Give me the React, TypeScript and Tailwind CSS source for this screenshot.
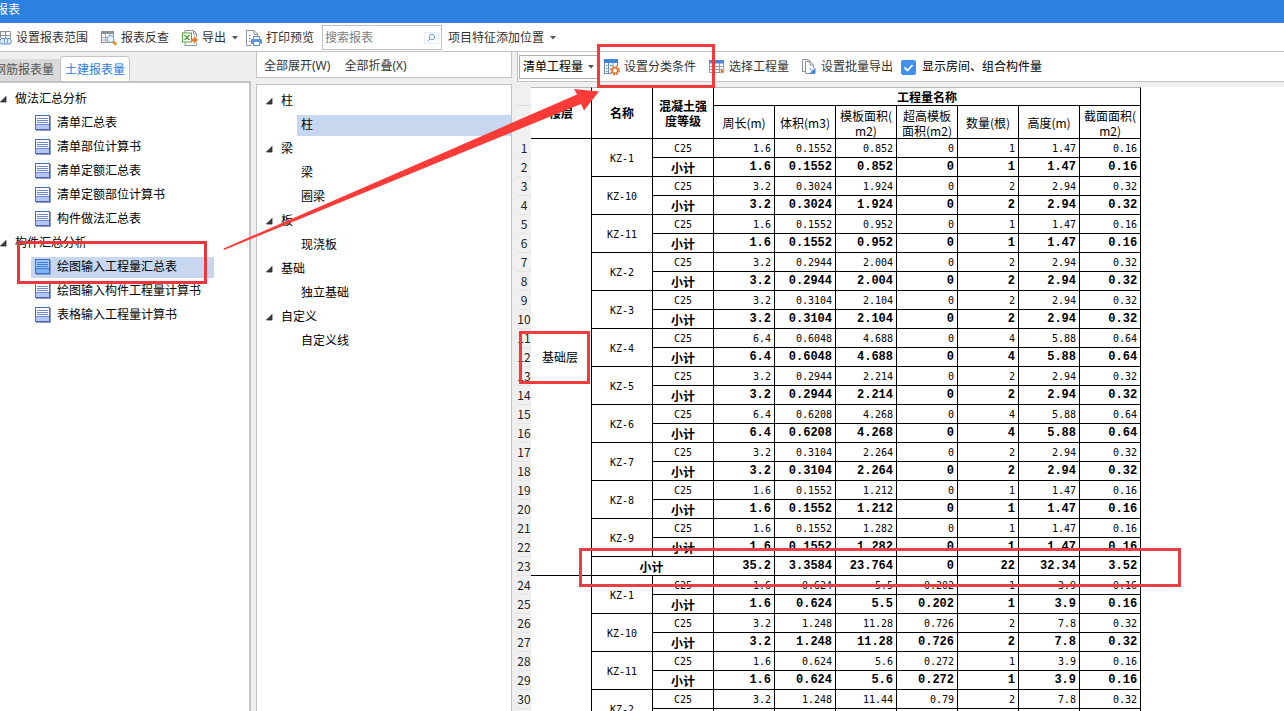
import type { ReactNode } from "react";

const ui = "font-['Noto_Sans','Noto_Sans_CJK_SC',sans-serif]";

type Member = { name: string; values: string[] };

const foundation: Member[] = [
  { name: "KZ-1", values: ["1.6", "0.1552", "0.852", "0", "1", "1.47", "0.16"] },
  { name: "KZ-10", values: ["3.2", "0.3024", "1.924", "0", "2", "2.94", "0.32"] },
  { name: "KZ-11", values: ["1.6", "0.1552", "0.952", "0", "1", "1.47", "0.16"] },
  { name: "KZ-2", values: ["3.2", "0.2944", "2.004", "0", "2", "2.94", "0.32"] },
  { name: "KZ-3", values: ["3.2", "0.3104", "2.104", "0", "2", "2.94", "0.32"] },
  { name: "KZ-4", values: ["6.4", "0.6048", "4.688", "0", "4", "5.88", "0.64"] },
  { name: "KZ-5", values: ["3.2", "0.2944", "2.214", "0", "2", "2.94", "0.32"] },
  { name: "KZ-6", values: ["6.4", "0.6208", "4.268", "0", "4", "5.88", "0.64"] },
  { name: "KZ-7", values: ["3.2", "0.3104", "2.264", "0", "2", "2.94", "0.32"] },
  { name: "KZ-8", values: ["1.6", "0.1552", "1.212", "0", "1", "1.47", "0.16"] },
  { name: "KZ-9", values: ["1.6", "0.1552", "1.282", "0", "1", "1.47", "0.16"] },
];
const foundationTotal = ["35.2", "3.3584", "23.764", "0", "22", "32.34", "3.52"];
const nextFloor: Member[] = [
  { name: "KZ-1", values: ["1.6", "0.624", "5.5", "0.202", "1", "3.9", "0.16"] },
  { name: "KZ-10", values: ["3.2", "1.248", "11.28", "0.726", "2", "7.8", "0.32"] },
  { name: "KZ-11", values: ["1.6", "0.624", "5.6", "0.272", "1", "3.9", "0.16"] },
  { name: "KZ-2", values: ["3.2", "1.248", "11.44", "0.79", "2", "7.8", "0.32"] },
];

const cell = "border-r border-b border-black p-0";

function RowNo({ n }: { n: number }) {
  return (
    <th scope="row" className="border-b border-[#e4e4e4] bg-[#f0f0f0] p-0 text-center text-xs leading-[18px] font-normal text-[#222]">
      {n}
    </th>
  );
}

function Values({ values, bold }: { values: string[]; bold?: boolean }) {
  return (
    <>
      {values.map((v, i) => (
        <td
          key={i}
          className={
            bold
              ? "border-r border-b border-black p-0 pt-px pr-[3px] text-right font-['Liberation_Mono',monospace] text-xs leading-[17px] font-bold"
              : "border-r border-b border-black p-0 pt-px pr-[3px] text-right font-['DejaVu_Sans_Mono',monospace] text-[10px] leading-[17px]"
          }
        >
          {v}
        </td>
      ))}
    </>
  );
}

function MemberRows({ member, start, floor }: { member: Member; start: number; floor?: ReactNode }) {
  return (
    <>
      <tr className="h-[19px]">
        <RowNo n={start} />
        {floor}
        <td rowSpan={2} className="border-r border-b border-black p-0 pt-0.5 text-center font-['DejaVu_Sans_Mono',monospace] text-[10px]">
          {member.name}
        </td>
        <td className="border-r border-b border-black p-0 pt-px text-center font-['DejaVu_Sans_Mono',monospace] text-[10px] leading-[17px]">
          C25
        </td>
        <Values values={member.values} />
      </tr>
      <tr className="h-[19px]">
        <RowNo n={start + 1} />
        <td className="border-r border-b border-black p-0 pt-px text-center text-xs leading-[17px] font-bold">小计</td>
        <Values values={member.values} bold />
      </tr>
    </>
  );
}

function ReportTable() {
  const heads: ReactNode[] = [
    "周长(m)",
    "体积(m3)",
    <>模板面积(<br />m2)</>,
    <>超高模板<br />面积(m2)</>,
    "数量(根)",
    "高度(m)",
    <>截面面积(<br />m2)</>,
  ];
  return (
    <table className="w-[624px] table-fixed border-separate border-spacing-0 font-['Noto_Sans_CJK_SC',sans-serif] text-xs text-black">
      <colgroup>
        <col className="w-[14px]" />
        {Array.from({ length: 10 }, (_, i) => <col key={i} className="w-[61px]" />)}
      </colgroup>
      <thead>
        <tr className="h-[19px]">
          <td className="border-b border-[#dcdcdc] bg-[#f0f0f0] p-0" />
          <th rowSpan={2} className={`${cell} border-t border-t-[#b8b8b8]`}>楼层</th>
          <th rowSpan={2} className={`${cell} border-t border-t-[#b8b8b8]`}>名称</th>
          <th rowSpan={2} className={`${cell} border-t border-t-[#b8b8b8] leading-[15px]`}>混凝土强<br />度等级</th>
          <th colSpan={7} className={`${cell} border-t border-t-[#b8b8b8] leading-[17px]`}>工程量名称</th>
        </tr>
        <tr className="h-[33px]">
          <td className="bg-[#f0f0f0] p-0" />
          {heads.map((h, i) => (
            <th key={i} className={`${cell} pt-px leading-[15px] font-normal`}>{h}</th>
          ))}
        </tr>
      </thead>
      <tbody>
        {foundation.map((m, i) => (
          <MemberRows
            key={m.name}
            member={m}
            start={i * 2 + 1}
            floor={i === 0 ? <td rowSpan={23} className={`${cell} pr-0.5 text-center`}>基础层</td> : undefined}
          />
        ))}
        <tr className="h-[19px]">
          <RowNo n={23} />
          <td colSpan={2} className={`${cell} pt-px pr-0.5 text-center leading-[17px] font-bold`}>小计</td>
          <Values values={foundationTotal} bold />
        </tr>
        {nextFloor.map((m, i) => (
          <MemberRows
            key={m.name}
            member={m}
            start={24 + i * 2}
            floor={i === 0 ? <td rowSpan={8} className={cell} /> : undefined}
          />
        ))}
      </tbody>
    </table>
  );
}

function Caret() {
  return (
    <svg width="6" height="4" viewBox="0 0 6 4" aria-hidden="true">
      <path d="M0 0h6L3 3.5z" fill="#555" />
    </svg>
  );
}

function Expander() {
  return (
    <svg width="7" height="7" viewBox="0 0 7 7" aria-hidden="true" className="shrink-0">
      <path d="M6 0.5V6H0.5z" fill="#404040" stroke="#222" strokeWidth="0.8" />
    </svg>
  );
}

function SheetIcon({ active }: { active?: boolean }) {
  return (
    <svg width="16" height="16" viewBox="0 0 16 16" aria-hidden="true" className="shrink-0">
      <rect x="0.5" y="0.5" width="14" height="14" fill={active ? "#9cc6f8" : "#fff"} stroke={active ? "#3d6fc0" : "#4d68b0"} />
      <path d="M15.5 1v14.5H1" fill="none" stroke="#8b9cc8" />
      <rect x="1" y="10" width="13" height="4" fill={active ? "#7fb2f3" : "#b4c7fa"} />
      <path d="M2 3.5h11M2 5.5h11M2 7.5h11M1 9.5h13" stroke={active ? "#3d7fd8" : "#6f8ac8"} />
    </svg>
  );
}

function RangeIcon() {
  return (
    <svg width="12" height="16" viewBox="4 0 12 16" aria-hidden="true">
      <path d="M0 1.5h14.5V8M0 5.5h14.5M4.5 1v7M9.5 1v7" fill="none" stroke="#8a929c" />
      <path d="M5 8.5h9l1.5 3-1.5 2.5H5l-1.5-2.5z" fill="#dceafa" stroke="#5a8fd0" />
      <path d="M8.5 8.5v5.5M11.5 8.5v5.5" stroke="#7fa8dc" />
    </svg>
  );
}

function LookupIcon() {
  return (
    <svg width="16" height="16" viewBox="0 0 16 16" aria-hidden="true">
      <rect x="0.5" y="1.5" width="12" height="11" fill="#fff" stroke="#8a929c" />
      <rect x="0" y="1" width="13" height="3" fill="#8a929c" />
      <path d="M1 7.5h12M1 10h12M4.5 4v9M8.5 4v9" stroke="#a5abb3" />
      <circle cx="9.5" cy="9" r="3.5" fill="#e6f1fd" stroke="#6fa3e0" />
      <path d="M12.2 11.7l3 3" stroke="#e09a2c" strokeWidth="2.8" />
    </svg>
  );
}

function ExportIcon() {
  return (
    <svg width="16" height="16" viewBox="0 0 16 16" aria-hidden="true">
      <path d="M3 3V.5h8.500L14.500 3.500V7M14.500 13v2.500H3V12" fill="none" stroke="#8a929c" />
      <path d="M11.500 1v3h3" fill="none" stroke="#8a929c" />
      <rect x="0.500" y="3" width="9" height="9" fill="#fff" stroke="#55a046" />
      <path d="M2.500 5l5 5M7.500 5l-5 5" stroke="#55a046" strokeWidth="1.500" />
      <path d="M9.500 8.500h2.500V6l4 4-4 4v-2.500H9.500z" fill="#dd7f33" />
    </svg>
  );
}

function PrintIcon() {
  return (
    <svg width="16" height="16" viewBox="0 0 16 16" aria-hidden="true">
      <path d="M5 15.500H.5V.5h7.500l3.500 3.500V6M8 1v3.500h3.500" fill="none" stroke="#8a929c" />
      <path d="M3 5.500h1.500M3 8.500h1.500M3 11.500h1.500" stroke="#7b838d" />
      <rect x="5" y="9" width="11" height="5" rx="1" fill="#5d97dc" />
      <rect x="7.500" y="6.500" width="6" height="3" fill="#fff" stroke="#5d97dc" />
      <rect x="7.500" y="11.500" width="6" height="4" fill="#fff" stroke="#5d97dc" />
    </svg>
  );
}

function ClassifyIcon() {
  return (
    <svg width="16" height="17" viewBox="0 0 16 17" aria-hidden="true">
      <rect x="0.500" y="1.500" width="13" height="13" fill="#fff" stroke="#5b8cc8" />
      <rect x="0" y="0" width="14" height="4" fill="#3f86d8" />
      <path d="M4.500 4v11M9 4v3M2 6.500h1.500M2 9.500h1.500M2 12.500h1.500M6 6.500h2M6 9.500h1" stroke="#5b8cc8" />
      <circle cx="11" cy="11.500" r="5" fill="#fff" />
      <circle cx="11" cy="11.500" r="4" fill="none" stroke="#e8762d" strokeWidth="2" strokeDasharray="1.800 1.340" />
      <circle cx="11" cy="11.500" r="2.700" fill="#fff" stroke="#e8762d" strokeWidth="1.600" />
    </svg>
  );
}

function PickIcon() {
  return (
    <svg width="16" height="16" viewBox="0 0 16 16" aria-hidden="true">
      <rect x="0.500" y="1.500" width="14" height="12" fill="#fff" stroke="#8a9bb0" />
      <rect x="0" y="1" width="15" height="3.500" fill="#4a88d4" />
      <path d="M1 7.500h14M1 10.500h14M5.500 4v10M10.500 4v10" stroke="#8a9bb0" />
      <path d="M11.500 8.500l4 3.500-4 3.500z" fill="#d27a35" stroke="#fff" strokeWidth="0.500" />
    </svg>
  );
}

function BatchIcon() {
  return (
    <svg width="15" height="16" viewBox="0 0 15 16" aria-hidden="true">
      <path d="M3 12.500H.5V.5h6L9 3" fill="none" stroke="#8a929c" />
      <path d="M8 14.500H3.500V2.500H8l3.500 3.500v3M8 3v3h3" fill="none" stroke="#8a929c" />
      <path d="M7.500 9l4 4M13 9.500v5H8z" fill="#4a88d4" stroke="#4a88d4" />
    </svg>
  );
}

function ToolButton({ icon, label, caret, className = "" }: { icon?: ReactNode; label: string; caret?: boolean; className?: string }) {
  return (
    <button type="button" className={`flex shrink-0 items-center gap-1 text-xs leading-4 whitespace-nowrap text-[#333] ${className}`}>
      {icon}
      <span>{label}</span>
      {caret && <span className="pl-0.5"><Caret /></span>}
    </button>
  );
}

function Toolbar() {
  return (
    <div className="flex h-[29px] shrink-0 items-center border-b border-[#c4c4c4] bg-white pt-px">
      <ToolButton icon={<RangeIcon />} label="设置报表范围" />
      <ToolButton icon={<LookupIcon />} label="报表反查" className="ml-[13px]" />
      <ToolButton icon={<ExportIcon />} label="导出" caret className="ml-[13px]" />
      <ToolButton icon={<PrintIcon />} label="打印预览" className="ml-2" />
      <label className="ml-2 flex h-[25px] w-[120px] items-center border border-[#c0c0c0] px-0.5">
        <input
          type="text"
          aria-label="搜索报表"
          placeholder="搜索报表"
          className="min-w-0 flex-1 text-xs outline-none placeholder:text-[#808080]"
        />
        <svg width="15" height="12" viewBox="0 0 15 12" aria-hidden="true">
          <rect x="0.500" y="0.500" width="14" height="11" fill="none" stroke="#e3eefb" />
          <circle cx="8" cy="5" r="2.700" fill="none" stroke="#6aa5e8" />
          <path d="M6 7L3.500 9.500" stroke="#6aa5e8" />
        </svg>
      </label>
      <ToolButton label="项目特征添加位置" caret className="ml-1.5" />
    </div>
  );
}

function ReportGroup({ title, items, selected }: { title: string; items: string[]; selected?: string }) {
  return (
    <li>
      <div className="flex h-6 items-center gap-2">
        <Expander />
        <span>{title}</span>
      </div>
      <ul>
        {items.map((t) => (
          <li key={t} className="flex h-6 items-center pl-[31px]">
            <a
              href="#report"
              className={
                t === selected
                  ? "flex h-[21px] w-[183px] items-center gap-1.5 bg-[#c6d7ef] pl-1"
                  : "flex h-[21px] items-center gap-1.5 pl-1"
              }
            >
              <SheetIcon active={t === selected} />
              <span>{t}</span>
            </a>
          </li>
        ))}
      </ul>
    </li>
  );
}

function ReportPanel() {
  return (
    <aside className="flex w-[251px] shrink-0 flex-col">
      <div role="tablist" className="flex h-[29px] items-end">
        <button type="button" role="tab" aria-selected="false" className="h-[22px] w-[60px] overflow-hidden bg-[#dadada] text-xs whitespace-nowrap text-[#555]">
          <span className="-ml-3">钢筋报表量</span>
        </button>
        <button type="button" role="tab" aria-selected="true" className="h-[25px] w-[70px] rounded-t-sm border border-b-0 border-[#c4c4c4] bg-white pt-px text-xs text-[#2b80e0]">
          土建报表量
        </button>
      </div>
      <div className="flex-1 border-t-2 border-r-2 border-[#c4c4c4] bg-white pt-1 text-xs text-black">
        <ul>
          <ReportGroup
            title="做法汇总分析"
            items={["清单汇总表", "清单部位计算书", "清单定额汇总表", "清单定额部位计算书", "构件做法汇总表"]}
          />
          <ReportGroup
            title="构件汇总分析"
            items={["绘图输入工程量汇总表", "绘图输入构件工程量计算书", "表格输入工程量计算书"]}
            selected="绘图输入工程量汇总表"
          />
        </ul>
      </div>
    </aside>
  );
}

const components = [
  { title: "柱", items: ["柱"] },
  { title: "梁", items: ["梁", "圈梁"] },
  { title: "板", items: ["现浇板"] },
  { title: "基础", items: ["独立基础"] },
  { title: "自定义", items: ["自定义线"] },
];

function ComponentPanel() {
  return (
    <section className="ml-[5px] flex w-64 shrink-0 flex-col gap-1.5">
      <div className="flex h-[26px] shrink-0 items-center gap-3.5 border border-t-0 border-[#c4c4c4] bg-white px-[7px] pt-0.5 text-xs text-[#333]">
        <button type="button">全部展开(W)</button>
        <button type="button">全部折叠(X)</button>
      </div>
      <div className="flex-1 border border-b-0 border-[#c4c4c4] bg-white pt-1 text-xs text-black">
        <ul>
          {components.map((g) => (
            <li key={g.title}>
              <div className="flex h-6 items-center gap-2 pl-[9px]">
                <Expander />
                <span>{g.title}</span>
              </div>
              <ul>
                {g.items.map((t) => (
                  <li key={t} className="flex h-6 items-center pl-10">
                    <a
                      href="#component"
                      className={
                        g.title === "柱"
                          ? "flex h-[21px] flex-1 items-center bg-[#c6d7ef] pl-1"
                          : "flex h-[21px] flex-1 items-center pl-1"
                      }
                    >
                      {t}
                    </a>
                  </li>
                ))}
              </ul>
            </li>
          ))}
        </ul>
      </div>
    </section>
  );
}

function ReportView() {
  return (
    <main className="ml-[5px] flex min-w-0 flex-1 flex-col gap-[5px]">
      <div className="flex h-[30px] shrink-0 items-center border-b border-l border-[#c4c4c4] bg-white pt-px">
        <div className="relative ml-px flex h-6 w-[79px] shrink-0 items-center border border-[#b0b0b0]">
          <select aria-label="工程量类型" className="h-full w-full appearance-none bg-transparent pl-[3px] text-xs text-black outline-none">
            <option>清单工程量</option>
          </select>
          <span className="pointer-events-none absolute right-[3px] flex">
            <Caret />
          </span>
        </div>
        <ToolButton icon={<ClassifyIcon />} label="设置分类条件" className="ml-1.5" />
        <ToolButton icon={<PickIcon />} label="选择工程量" className="ml-[13px]" />
        <ToolButton icon={<BatchIcon />} label="设置批量导出" className="ml-[13px]" />
        <label className="ml-2 flex shrink-0 items-center gap-1.5 text-xs whitespace-nowrap text-black">
          <span className="grid size-[15px]">
            <input type="checkbox" defaultChecked className="col-start-1 row-start-1 size-[15px] appearance-none rounded-xs bg-[#4391ec]" />
            <svg width="15" height="15" viewBox="0 0 15 15" aria-hidden="true" className="pointer-events-none col-start-1 row-start-1">
              <path d="M3.500 7.500l3 3L11.500 5" fill="none" stroke="#fff" strokeWidth="1.800" />
            </svg>
          </span>
          显示房间、组合构件量
        </label>
      </div>
      <div className="min-h-0 flex-1 overflow-hidden bg-white">
        <ReportTable />
      </div>
    </main>
  );
}

function Annotations() {
  return (
    <div aria-hidden="true" className="pointer-events-none">
      <div className="absolute top-[44px] left-[597px] h-[44px] w-[118px] border-3 border-[#f43a3a]" />
      <div className="absolute top-[241px] left-[17px] h-[43px] w-[190px] border-3 border-[#e8383b]" />
      <div className="absolute top-[331px] left-[519px] h-[53px] w-[71px] border-3 border-[#f43a3a]" />
      <div className="absolute top-[548px] left-[579px] h-[39px] w-[602px] border-3 border-[#e64046]" />
      <svg width="380" height="166" viewBox="222 86 380 166" className="absolute top-[86px] left-[222px]">
        <path d="M223.500 248.500L577 94.500l-3-5.500 25 2.500-15 19-3-6.500L224 250z" fill="#fb3b38" />
      </svg>
    </div>
  );
}

export default function App() {
  return (
    <div className={`relative flex h-screen flex-col overflow-hidden bg-[#efefef] ${ui}`}>
      <header className="flex h-[23px] shrink-0 items-center bg-[#2b80e0] pb-1 text-xs text-white">
        <h1 className="-ml-1">报表</h1>
      </header>
      <Toolbar />
      <div className="flex min-h-0 flex-1">
        <ReportPanel />
        <ComponentPanel />
        <ReportView />
      </div>
      <Annotations />
    </div>
  );
}
